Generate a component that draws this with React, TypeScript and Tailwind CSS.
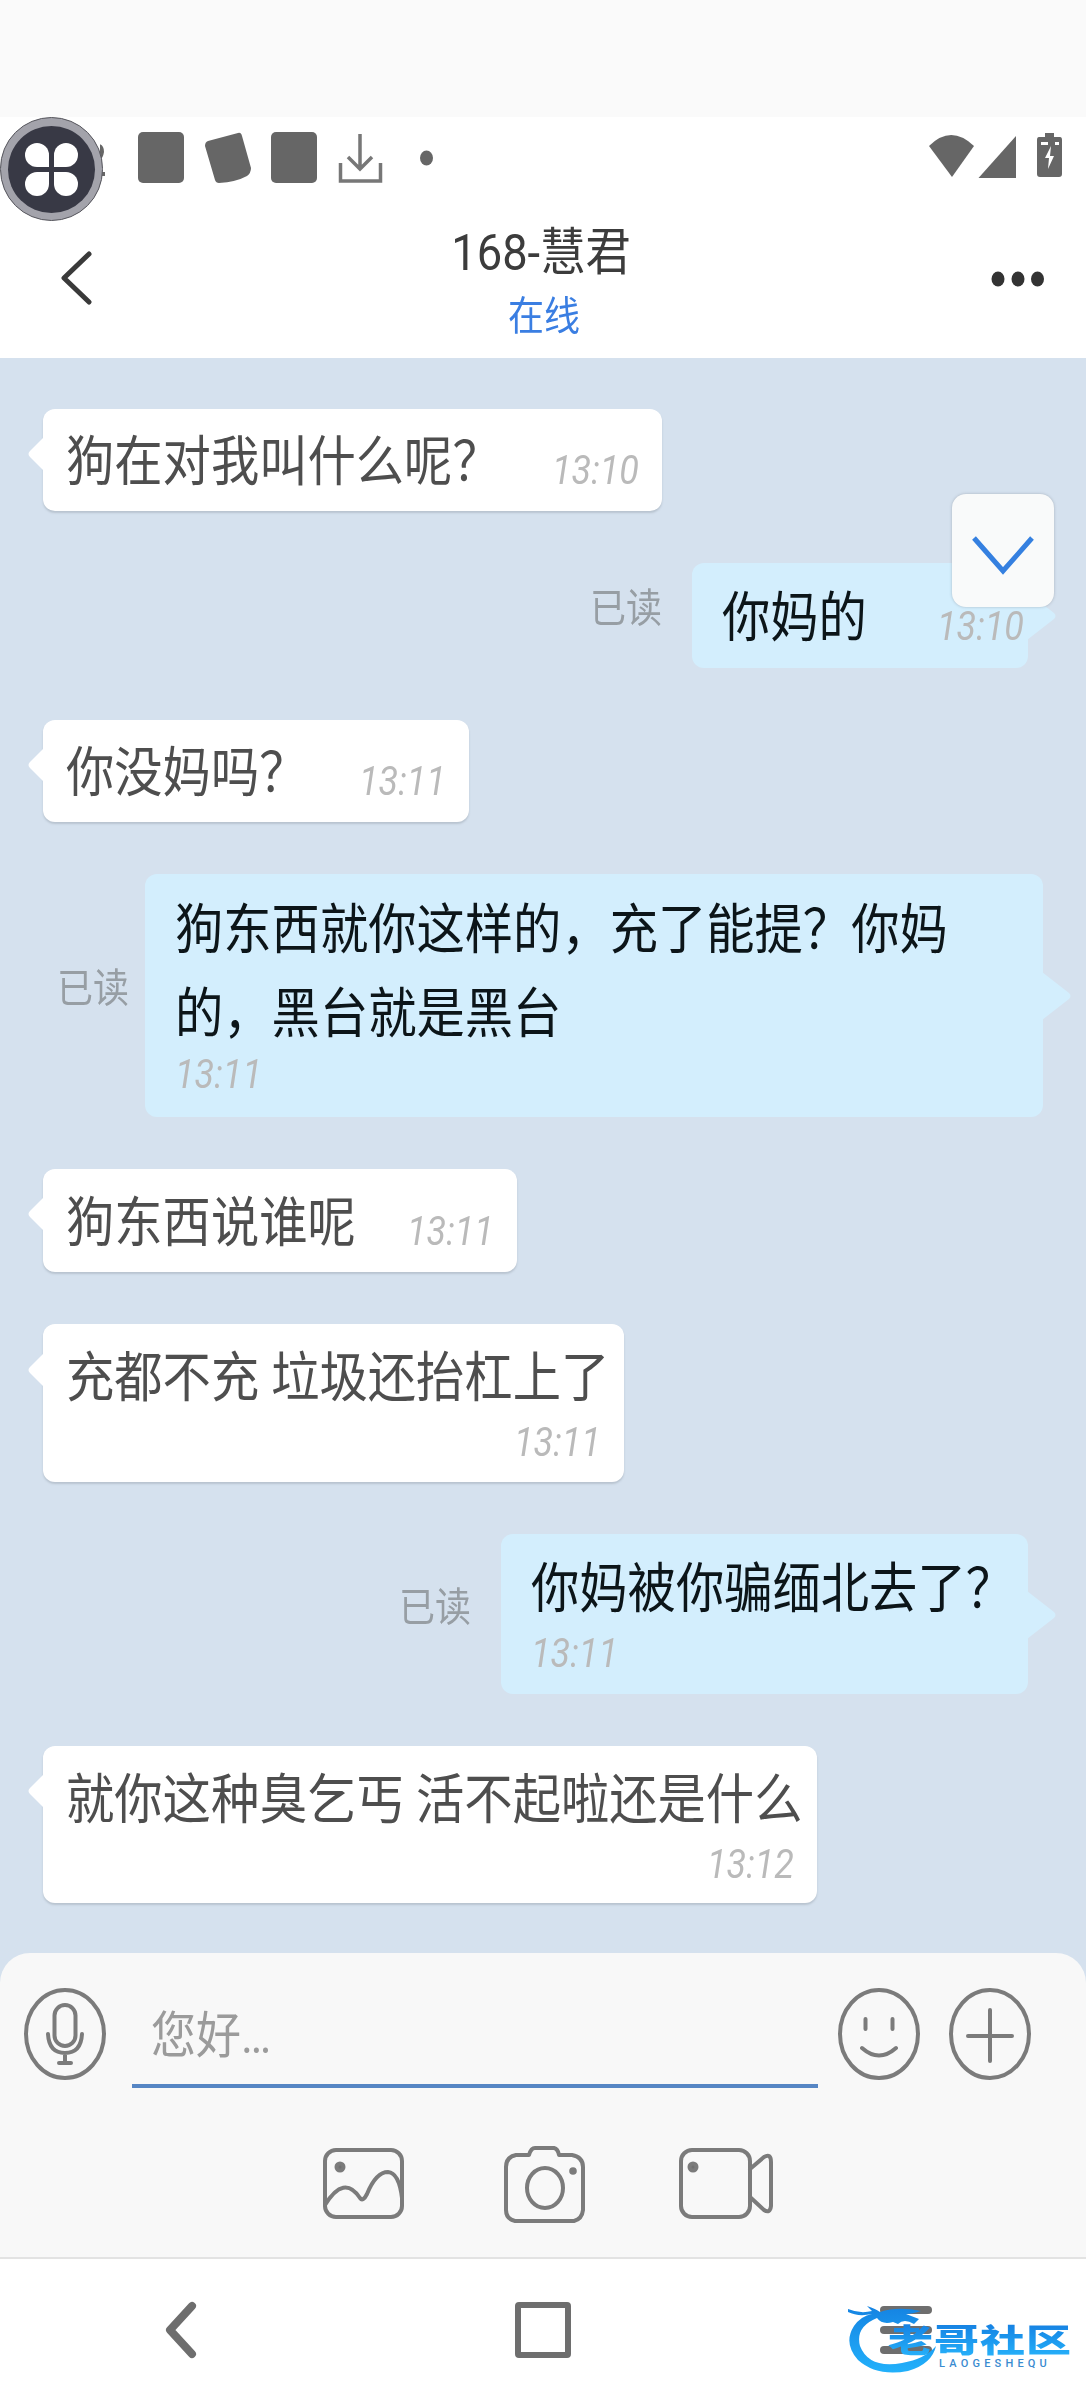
import type { ReactNode } from 'react';
import clsx from 'clsx';

type Message = {
  mine?: boolean;
  stacked?: boolean;
  text: string[];
  time: string;
  box: string;
  tail: string;
};

const MESSAGES: Message[] = [
  { text: ['狗在对我叫什么呢？'], time: '13:10', box: 'w-[619px] h-[102px]', tail: 'top-[28px]' },
  { mine: true, text: ['你妈的'], time: '13:10', box: 'w-[336px] h-[105px] mr-[58px] pr-[4px]', tail: 'top-[29px]' },
  { text: ['你没妈吗？'], time: '13:11', box: 'w-[426px] h-[102px]', tail: 'top-[28px]' },
  { mine: true, stacked: true, text: ['狗东西就你这样的，充了能提？你妈', '的，黑台就是黑台'], time: '13:11', box: 'w-[898px] h-[243px] mr-[43px] pt-[20px]', tail: 'top-[98px]' },
  { text: ['狗东西说谁呢'], time: '13:11', box: 'w-[474px] h-[103px]', tail: 'top-[28px]' },
  { stacked: true, text: ['充都不充 垃圾还抬杠上了'], time: '13:11', box: 'w-[581px] h-[158px] pt-[16px]', tail: 'top-[29px]' },
  { mine: true, stacked: true, text: ['你妈被你骗缅北去了？'], time: '13:11', box: 'w-[527px] h-[160px] mr-[58px] pt-[17px]', tail: 'top-[57px]' },
  { stacked: true, text: ['就你这种臭乞丐 活不起啦还是什么'], time: '13:12', box: 'w-[774px] h-[157px] pt-[16px]', tail: 'top-[28px]' },
];

function Bubble({ msg }: { msg: Message }) {
  const { mine, stacked } = msg;
  return (
    <div className={clsx('flex items-center', mine ? 'justify-end' : 'pl-[43px]')}>
      {mine && (
        <span className={clsx('-mt-[13px] text-[36px] leading-none text-[#979ea4] scale-y-[1.12]', msg.text.length > 1 ? 'mr-[16px]' : 'mr-[30px]')}>已读</span>
      )}
      <div
        className={clsx(
          'relative flex rounded-[12px] whitespace-nowrap',
          msg.box,
          stacked ? 'flex-col' : 'items-center justify-between',
          mine ? 'bg-[#d3eefd] pl-[30px] text-[#0c1519]' : 'bg-white px-[23px] text-[#4e4e4e] shadow-[0_2px_2px_rgba(120,130,140,0.3)]',
        )}>
        <svg
          className={clsx('absolute', msg.tail, mine ? '-right-[28px] fill-[#d3eefd]' : '-left-[15px] fill-white')}
          width={mine ? 29 : 16} height={mine ? 48 : 34}
          viewBox={mine ? '0 0 29 48' : '0 0 16 34'}>
          <path d={mine ? 'M0 0L27 21Q30 24 27 27L0 48Z' : 'M16 0L2 14Q-1 17 2 20L16 34Z'} />
        </svg>
        <div className={clsx('pt-[3px] -mb-[3px] text-[48.3px] scale-y-[1.12]', msg.text.length > 1 ? 'leading-[75px]' : 'leading-[72px]')}>
          {msg.text.map((line) => <p key={line}>{line}</p>)}
        </div>
        <time
          className={clsx(
            'relative text-[36px] italic leading-[56px] text-[#bababa] scale-y-[1.12]',
            stacked ? (mine ? 'mt-[3px] self-start' : 'mt-[3px] self-end') : 'mt-[22px]',
          )}>
          {msg.time}
        </time>
      </div>
    </div>
  );
}

function StatusBar() {
  return (
    <div className="flex h-[104px] items-start pt-[14px]">
      <svg width="340" height="54" viewBox="100 131 340 54" className="ml-[100px] fill-[#666]">
        <rect x="138" y="132" width="46" height="51" rx="5" />
        <path d="M208 141L238 133Q241 132 242 136L251 168Q251 173 247 176Q236 182 219 183Q216 183 215 180L205 146Q205 142 208 141Z" />
        <rect x="271" y="132" width="46" height="51" rx="5" />
        <path d="M360 134V168M348 157L360 169L372 157M340.500 163V181H380.500V163" fill="none" stroke="#777" strokeWidth="3.500" />
        <ellipse cx="426.500" cy="158" rx="6.500" ry="7.500" />
        <path d="M99 144Q104 145 104 152Q103 158 100 160ZM101 172h4v4h-4Z" />
      </svg>
      <svg width="140" height="48" viewBox="926 132 140 48" className="ml-auto mr-[20px] fill-[#666]">
        <path d="M929 147Q951 125 974 147L952 178Z" />
        <path d="M1016 137V179H978.500Z" />
        <path d="M1045 134h9v4h6q2 0 2 3v34q0 3-3 3h-19q-3 0-3-3v-34q0-3 2-3h6Z" />
        <path d="M1051 147L1045 159H1049L1048 170L1054 157H1050ZM1041 143h7v3h-7ZM1055 143h4v3h-4Z" fill="#fff" />
      </svg>
    </div>
  );
}

function Header() {
  return (
    <div className="flex h-[137px] items-start justify-between">
      <svg width="34" height="56" viewBox="0 0 34 56" fill="none" stroke="#3a3a3a" strokeWidth="5" strokeLinecap="round" strokeLinejoin="round" className="ml-[59px] mt-[29px]">
        <path d="M30 4L5 28L30 52" />
      </svg>
      <div className="mr-[2px] flex flex-col items-center">
        <h1 className="mt-[2px] text-[45.300px] leading-[60px] text-[#3c3c3c] scale-y-[1.12]">168-慧君</h1>
        <p className="mt-[8px] ml-[6px] text-[36px] leading-[52px] text-[#3a7ee2] scale-y-[1.12]">在线</p>
      </div>
      <svg width="54" height="16" viewBox="0 0 54 16" className="mt-[50px] mr-[41px] fill-[#333]">
        <ellipse cx="7" cy="8" rx="6.500" ry="7.500" />
        <ellipse cx="27" cy="8" rx="6.500" ry="7.500" />
        <ellipse cx="46.500" cy="8" rx="6.500" ry="7.500" />
      </svg>
    </div>
  );
}

function Line({ w, h, className, children }: { w: number; h: number; className?: string; children: ReactNode }) {
  return (
    <svg width={w} height={h} viewBox={`0 0 ${w} ${h}`} fill="none" stroke="#7b7b7b" strokeWidth="4" strokeLinecap="round" strokeLinejoin="round" className={className}>
      {children}
    </svg>
  );
}

function Composer() {
  return (
    <div className="bg-[#d5e1ee]">
      <div className="h-[306px] rounded-t-[30px] border-b-2 border-[#e3e3e3] bg-[#f8f8f8]">
        <div className="flex items-start pt-[35px] pl-[24px]">
          <Line w={82} h={92}>
            <ellipse cx="41" cy="46" rx="39" ry="44" />
            <rect x="30.500" y="17" width="21" height="41" rx="10.500" />
            <path d="M24 46Q25 65 41 65Q57 65 58 46M41 65V74M35 75H47" />
          </Line>
          <div className="ml-[26px] flex h-[100px] w-[686px] items-center border-b-4 border-[#5686c4] pl-[19px] text-[45px] text-[#9b9b9b]">
            <span className="-mt-[2px] leading-none scale-y-[1.12]">您好…</span>
          </div>
          <Line w={82} h={92} className="ml-[20px]">
            <ellipse cx="41" cy="46" rx="39" ry="44" />
            <path d="M27.500 31V41M54.500 31V41M24 60Q41 75 58 60" />
          </Line>
          <Line w={82} h={92} className="ml-[29px]">
            <ellipse cx="41" cy="46" rx="39" ry="44" />
            <path d="M41 22V73M19 48H63" />
          </Line>
        </div>
        <div className="mt-[57px] flex items-start pl-[322px]">
          <Line w={83} h={78}>
            <rect x="3" y="5" width="77" height="67" rx="11" />
            <circle cx="18" cy="22" r="3.500" fill="#707070" />
            <path d="M3 60Q22 29 38 53Q41 57 45 49Q54 27 66 27Q77 28 80 53" />
          </Line>
          <Line w={83} h={78} className="ml-[98px]">
            <path d="M13 10H26Q28 3 32 3H51Q55 4 56 10H69Q80 12 80 22V65Q79 74 71 76H12Q3 74 3 65V22Q3 12 13 10Z" />
            <ellipse cx="42" cy="43" rx="18" ry="20" />
            <circle cx="70" cy="26" r="1.800" fill="#707070" />
          </Line>
          <Line w={96} h={78} className="ml-[92px]">
            <rect x="3" y="5" width="69" height="67" rx="11" />
            <circle cx="15" cy="22" r="3.500" fill="#707070" />
            <path d="M72 24L86 12Q93 8 93 17V61Q92 69 86 65L72 52" />
          </Line>
        </div>
      </div>
    </div>
  );
}

function Watermark() {
  return (
    <div className="absolute left-[848px] top-[2303px] flex h-[72px] w-[222px]">
      <svg width="92" height="72" viewBox="0 0 92 72" className="absolute left-0 top-0">
        <defs>
          <linearGradient id="swirl" x1="0" y1="0" x2="0" y2="1">
            <stop offset="0" stopColor="#1583e2" />
            <stop offset="1" stopColor="#22b1fb" />
          </linearGradient>
        </defs>
        <path d="M0 6Q12 11 24 8L19 3Q28 6 32 9Q50 3 73 8Q64 11 58 11L71 16L66 21Q56 15 50 21L45 19Q34 22 29 15Q7 24 12 43Q21 66 54 60Q77 56 88 43Q84 61 60 68Q29 74 10 57Q-5 40 6 23Q13 13 24 11Q10 14 0 9Z" fill="url(#swirl)" />
      </svg>
      <div className="ml-[40px] mt-[20px] flex flex-col">
        <span className="-mb-[13px] h-[50px] origin-top bg-linear-to-b from-[#1680e2] to-[#28b4fb] bg-clip-text text-[45px] leading-[50px] font-black tracking-[1px] whitespace-nowrap text-transparent scale-y-[0.72]">
          老哥社区
        </span>
        <span className="-mt-[2px] ml-[51px] text-[11px] leading-[12px] font-medium tracking-[4.200px] text-[#3a8bd0]">LAOGESHEQU</span>
      </div>
    </div>
  );
}

export default function App() {
  return (
    <div className="relative h-[2400px] w-[1086px] overflow-hidden bg-white font-[Roboto,'Noto_Sans_CJK_SC',sans-serif]" lang="zh-CN">
      <div className="h-[117px] bg-[#fafafa]" />
      <StatusBar />
      <Header />
      <main className="flex h-[1595px] flex-col gap-[52px] bg-[#d5e1ee] pt-[51px]">
        {MESSAGES.map((msg, i) => <Bubble key={i} msg={msg} />)}
      </main>
      <Composer />

      <nav className="flex h-[141px] items-center">
        <svg width="36" height="60" viewBox="0 0 36 60" fill="none" stroke="#6e6e6e" strokeWidth="8" strokeLinecap="round" strokeLinejoin="round" className="ml-[163px]">
          <path d="M29 6L7 30L29 54" />
        </svg>
        <div className="ml-[316px] h-[56px] w-[56px] rounded-[4px] border-[6px] border-[#6e6e6e]" />
        <div className="ml-[309px] flex w-[52px] flex-col gap-[12px]">
          <i className="h-[8px] rounded-full bg-[#6e6e6e]" />
          <i className="h-[8px] rounded-full bg-[#6e6e6e]" />
          <i className="h-[8px] rounded-full bg-[#6e6e6e]" />
        </div>
      </nav>

      {/* scroll-to-latest button */}
      <div className="absolute left-[952px] top-[494px] flex h-[113px] w-[102px] items-center justify-center rounded-[14px] bg-[#f9fafa] shadow-[0_0_3px_rgba(110,120,130,0.45)]">
        <svg width="64" height="42" viewBox="0 0 64 42" fill="none" stroke="#3580e0" strokeWidth="5" className="mt-[11px]">
          <path d="M3 3L32 36L61 3" />
        </svg>
      </div>

      {/* floating assistant ball */}
      <div className="absolute left-0 top-[117px] flex h-[104px] w-[103px] items-center justify-center rounded-full border border-[#55555c] bg-[#a3a3ab]">
        <div className="grid h-[87px] w-[87px] grid-cols-2 content-center justify-center gap-[5px] rounded-full bg-[#383945] px-[17px]">
          <i className="h-[24px] rounded-[12px] rounded-br-none bg-white" />
          <i className="h-[24px] rounded-[12px] rounded-bl-none bg-white" />
          <i className="h-[24px] rounded-[12px] rounded-tr-none bg-white" />
          <i className="h-[24px] rounded-[12px] rounded-tl-none bg-white" />
        </div>
      </div>

      <Watermark />
    </div>
  );
}
